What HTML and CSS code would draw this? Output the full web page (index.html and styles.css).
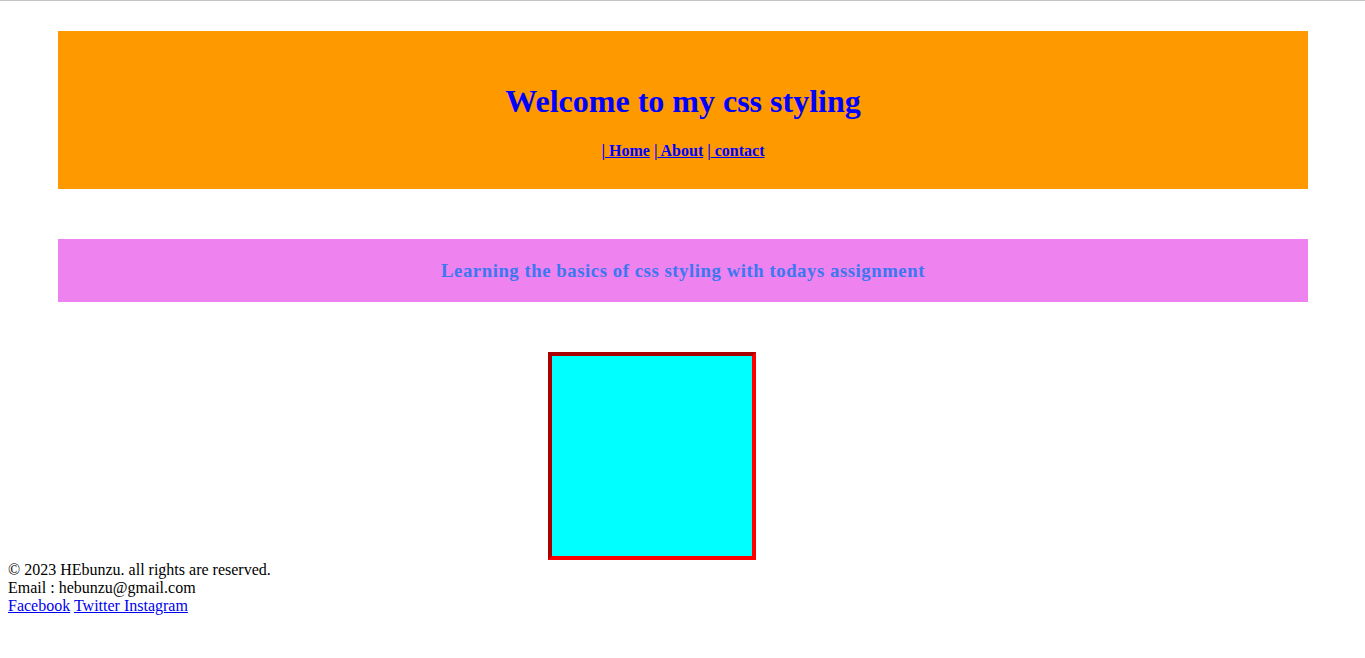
FILE: index.html
```html
<!DOCTYPE html>
<html>
<head>
<meta charset="utf-8">
<title>css styling</title>
<link rel="stylesheet" href="styles.css">
</head>
<body>
<div class="topline"></div>
<header class="banner">
  <h1 class="banner-title">Welcome to my css styling</h1>
  <nav class="nav">|<a href="#"> Home</a> |<a href="#"> About</a> |<a href="#"> contact</a></nav>
</header>
<section class="intro">
  <h3 class="intro-text">Learning the basics of css styling with todays assignment</h3>
</section>
<div class="box"></div>
<footer class="footer">
  <div>© 2023 HEbunzu. all rights are reserved.</div>
  <div>Email : hebunzu@gmail.com</div>
  <div><a href="#">Facebook</a> <a href="#">Twitter Instagram</a></div>
</footer>
</body>
</html>
```
FILE: styles.css
```css
html, body {
  margin: 0;
  padding: 0;
  background: #ffffff;
}
body {
  font-family: "Liberation Serif", "Times New Roman", serif;
  font-size: 16px;
  color: #000;
}
.topline {
  height: 1px;
  background: #c4c4c4;
}
.banner {
  margin: 30px 0 0 58px;
  width: 1250px;
  height: 158px;
  box-sizing: border-box;
  background: #ff9900;
  text-align: center;
  padding-top: 1px;
}
.banner-title {
  margin: 51px 0 0;
  font-size: 32px;
  line-height: 37px;
  font-weight: bold;
  color: #0000ff;
}
.nav {
  margin-top: 22px;
  font-weight: bold;
  font-size: 16px;
  line-height: 18px;
  color: #0000ff;
}
.nav a {
  color: #0000ff;
  text-decoration: underline;
}
.intro {
  margin: 50px 0 0 58px;
  width: 1250px;
  height: 63px;
  box-sizing: border-box;
  background: #ee82ee;
  text-align: center;
  padding-top: 21px;
}
.intro-text {
  margin: 0;
  font-size: 18.72px;
  line-height: 22px;
  letter-spacing: 0.56px;
  font-weight: bold;
  color: #3a78f2;
}
.box {
  margin: 50px 0 0 548px;
  width: 200px;
  height: 200px;
  background: #00ffff;
  border: 4px inset #ff0000;
}
.footer {
  padding: 1px 0 0 8px;
  line-height: 18px;
}
.footer a {
  color: #0000ee;
}
```
